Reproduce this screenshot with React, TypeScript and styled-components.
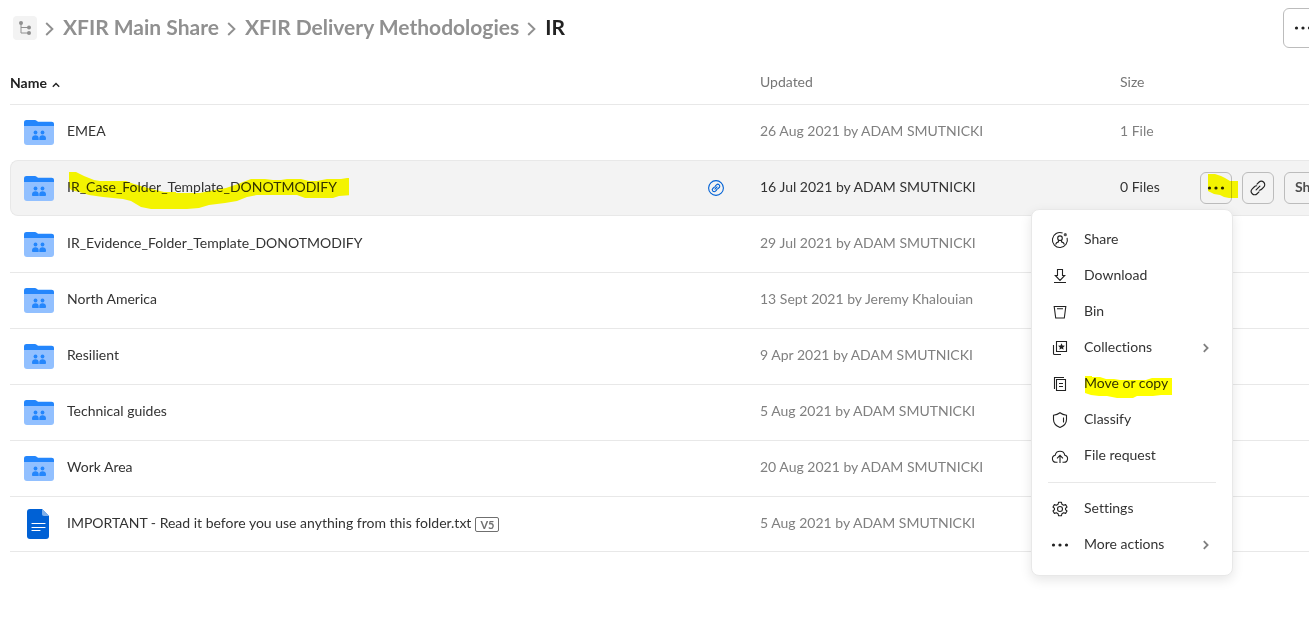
import React from 'react';
import styled, { createGlobalStyle, css } from 'styled-components';

const GlobalStyle = createGlobalStyle`
  *, *::before, *::after { box-sizing: border-box; }
  body {
    margin: 0;
    background: #fff;
    color: #333;
    font: 14px/20px Lato, "Liberation Sans", sans-serif;
    font-variant-ligatures: none;
    overflow: hidden;
  }
  button { font: inherit; font-variant-ligatures: none; color: inherit; cursor: pointer; }
  a { color: inherit; text-decoration: none; }
  svg { display: block; flex: none; }
`;

/* The list runs a little past the right edge of the window, as a scrolled pane. */
const Page = styled.div`
  width: calc(100% + 40px);
  min-height: 100vh;
  padding-left: 10px;
`;

const Header = styled.header`
  display: flex;
  align-items: center;
  justify-content: space-between;
  height: 56px;
  padding-right: 26px;
`;

const Crumbs = styled.nav`
  display: flex;
  align-items: center;
  gap: 8px;
  padding-left: 3px;
  font-size: 21px;
  line-height: 28px;
  font-weight: 700;
  color: #909090;
`;

const Crumb = styled.a<{ $current?: boolean }>`
  padding-bottom: 2px;
  color: ${(p) => (p.$current ? '#222' : 'inherit')};
`;

const TreeButton = styled.button`
  display: grid;
  place-items: center;
  width: 24px;
  height: 24px;
  padding: 0;
  border: 0;
  border-radius: 4px;
  background: #f3f3f3;
`;

const OutlineButton = styled.button<{ $size?: number }>`
  display: grid;
  place-items: center;
  flex: none;
  min-width: ${(p) => p.$size ?? 32}px;
  height: ${(p) => p.$size ?? 32}px;
  padding: 0;
  border: 1px solid #bcbcbc;
  border-radius: 6px;
  background: transparent;
`;

const ShareButton = styled(OutlineButton)`
  padding: 0 10px 2px;
  font-weight: 700;
  color: #4e4e4e;
`;

const FileTable = styled.table`
  width: 100%;
  table-layout: fixed;
  border-collapse: separate;
  border-spacing: 0;
`;

const HeadCell = styled.th<{ $width?: number; $sorted?: boolean }>`
  width: ${(p) => (p.$width ? `${p.$width}px` : 'auto')};
  height: 48px;
  padding: 4px 0 0;
  text-align: left;
  font-weight: ${(p) => (p.$sorted ? 700 : 400)};
  color: ${(p) => (p.$sorted ? '#222' : '#767676')};
`;

const SortLabel = styled.span`
  display: flex;
  align-items: center;
  gap: 5px;
  padding-top: 2px;
`;

const Cell = styled.td`
  height: 56px;
  padding: 0 0 1px;
  border-top: 1px solid #e8e8e8;
  color: #808080;
`;

const NameCell = styled(Cell)`
  padding: 0 36px 1px 13px;
`;

const Row = styled.tr<{ $selected?: boolean }>`
  &:last-child ${Cell} {
    border-bottom: 1px solid #e8e8e8;
    padding-bottom: 0;
  }
  ${(p) =>
    p.$selected &&
    css`
      ${Cell} {
        background: #f3f3f3;
        border-bottom: 1px solid #e8e8e8;
        padding-bottom: 0;
        color: #333;
      }
      ${Cell}:first-child {
        border-left: 1px solid #e8e8e8;
        border-radius: 8px 0 0 8px;
        padding-left: 12px;
      }
      & + tr ${Cell} { border-top-color: transparent; }
    `}
`;

const NameLine = styled.div`
  display: flex;
  align-items: center;
  gap: 12px;
`;

const FileName = styled.a`
  position: relative;
  padding-bottom: 2px;
  color: #333;
`;

const Text = styled.div`
  padding-bottom: 2px;
`;

const Version = styled.span`
  margin-left: -8px;
  padding: 0 4px;
  border: 1px solid #6f6f6f;
  border-radius: 2px;
  font-size: 11px;
  line-height: 13px;
  font-weight: 700;
  color: #6f6f6f;
`;

const SharedLink = styled.span`
  margin-left: auto;
`;

const Actions = styled.div`
  display: flex;
  gap: 10px;
`;

const MenuAnchor = styled.div`
  position: relative;
`;

const Menu = styled.div`
  position: absolute;
  top: calc(100% + 5px);
  right: -1px;
  z-index: 1;
  width: 202px;
  padding: 12px 16px;
  border: 1px solid #e8e8e8;
  border-radius: 8px;
  background: #fff;
  box-shadow: 0 4px 12px rgba(0, 0, 0, 0.1);
`;

const MenuItem = styled.button`
  display: flex;
  align-items: center;
  gap: 12px;
  width: 100%;
  height: 36px;
  padding: 0 6px 0 0;
  border: 0;
  background: none;
  text-align: left;
  color: #333;
`;

const MenuLabel = styled.span`
  position: relative;
  margin-right: auto;
  padding-bottom: 2px;
`;

const MenuRule = styled.hr`
  height: 1px;
  margin: 8px 0;
  border: 0;
  background: #e8e8e8;
`;

/* Marker strokes lie over the text and multiply into it. */
const Marker = styled.svg<{ $x: number; $y: number }>`
  position: absolute;
  left: ${(p) => p.$x}px;
  top: ${(p) => p.$y}px;
  mix-blend-mode: multiply;
  pointer-events: none;
  fill: #ff0;
`;

const Chevron = () => (
  <svg width="10" height="16" viewBox="0 0 10 16" fill="none" stroke="#909090" strokeWidth="1.900" aria-hidden="true">
    <path d="M1.200 3 7.400 9 1.200 15" />
  </svg>
);

const TreeIcon = () => (
  <svg width="16" height="16" viewBox="0 0 16 16" fill="#909090" aria-hidden="true">
    <circle cx="4" cy="3" r="2" />
    <circle cx="12" cy="7.500" r="2" />
    <circle cx="12" cy="13" r="2" />
    <path d="M4 3v10h8M4 7.500h8" fill="none" stroke="#909090" />
  </svg>
);

const SortIcon = () => (
  <svg width="8" height="12" viewBox="0 0 8 12" fill="none" stroke="#222" strokeWidth="1.400" aria-hidden="true">
    <path d="M.8 9.700 4 6.500 7.200 9.700" />
  </svg>
);

const FolderIcon = () => (
  <svg width="32" height="32" viewBox="0 0 32 32" aria-hidden="true">
    <path d="M1 12V6.500C1 4.800 2 4 3.500 4h8c1 0 1.500.3 2.200.8l.6.400c.5.400 1 .5 1.700.5h12.500c1.500 0 2.500.8 2.500 2.300v4z" fill="#2486fc" />
    <path d="M1 10h30v16c0 2-1 3-3 3H4c-2 0-3-1-3-3z" fill="#92c0ff" />
    <g fill="#2486fc">
      <circle cx="12.500" cy="16.500" r="1.900" />
      <circle cx="19.500" cy="16.500" r="1.900" />
      <path d="M9 22.500c0-2 1.500-3.200 3.500-3.200s3.200 1.200 3.200 3.200v1.500H10c-.7 0-1-.3-1-.8zM16.300 22.500c0-2 1.200-3.200 3.200-3.200s3.500 1.200 3.500 3.200v.7c0 .5-.3.8-1 .8h-5.700z" />
    </g>
  </svg>
);

const DocIcon = () => (
  <svg width="32" height="32" viewBox="0 0 32 32" aria-hidden="true">
    <path d="M7 1h12l7 7v20c0 2-1 3-3 3H7c-2 0-3-1-3-3V4c0-2 1-3 3-3z" fill="#0061d5" />
    <path d="M19 1l7 7h-5c-1.300 0-2-.7-2-2z" fill="#7fb0ea" />
    <path d="M9 15.500h13M9 19.500h13M9 22.500h8" stroke="#fff" strokeWidth="1.200" strokeLinecap="round" />
  </svg>
);

const ChainPaths = () => (
  <path d="M6.300 9.700 9.700 6.300M7.100 4.600l1.700-1.700a3 3 0 0 1 4.300 4.300l-1.900 1.900a3 3 0 0 1-2 .9M8.900 11.400l-1.700 1.700a3 3 0 0 1-4.300-4.300l1.900-1.900a3 3 0 0 1 2-.9" strokeLinecap="round" />
);

const ChainIcon = () => (
  <svg width="18" height="18" viewBox="0 0 16 16" fill="none" stroke="#222" aria-hidden="true">
    <ChainPaths />
  </svg>
);

const SharedLinkIcon = () => (
  <svg width="16" height="16" viewBox="0 0 16 16" fill="none" stroke="#0061d5" role="img" aria-label="Shared link">
    <circle cx="8" cy="8" r="7.400" strokeWidth="1.100" />
    <g transform="translate(3 3) scale(.625)" strokeWidth="1.700">
      <ChainPaths />
    </g>
  </svg>
);

const DotsIcon = () => (
  <svg width="18" height="18" viewBox="0 0 18 18" fill="#222" aria-hidden="true">
    <circle cx="2.500" cy="9" r="1.600" />
    <circle cx="9" cy="9" r="1.600" />
    <circle cx="15.500" cy="9" r="1.600" />
  </svg>
);

const MenuGlyph = ({ children }: { children: React.ReactNode }) => (
  <svg width="24" height="24" viewBox="0 0 24 24" fill="none" stroke="#222" strokeWidth="1.100" aria-hidden="true">
    {children}
  </svg>
);

const glyphs = {
  share: (
    <MenuGlyph>
      <path d="M14.600 5A7.500 7.500 0 1 0 19.100 9.900" />
      <circle cx="12" cy="10.200" r="2.300" />
      <path d="M7.600 16.500c.4-1.600 1.400-2.300 2.900-2.600v-1.600M16.400 16.500c-.4-1.600-1.400-2.300-2.900-2.600v-1.600" />
      <circle cx="17.300" cy="6.700" r="1.600" fill="#555" stroke="none" />
    </MenuGlyph>
  ),
  download: (
    <MenuGlyph>
      <path d="M9.500 5.500h5v6h2.200L12 16.500l-4.700-5h2.200zM6 18.500h12" />
    </MenuGlyph>
  ),
  bin: (
    <MenuGlyph>
      <path d="M6.200 6.500h11.600l-1.500 11.500H7.700zM9 8.700h6" />
    </MenuGlyph>
  ),
  collections: (
    <MenuGlyph>
      <path d="M8.500 5.500h10v10h-10zM5.500 9v8.500a1 1 0 0 0 1 1H13" />
      <path d="m13.500 7.300 1 2.200 2.400.3-1.800 1.600.5 2.400-2.100-1.200-2.100 1.200.5-2.400-1.800-1.600 2.400-.3z" fill="#222" stroke="none" />
    </MenuGlyph>
  ),
  copy: (
    <MenuGlyph>
      <path d="M8.500 7.500h9v11h-9zM6.500 17V5.500H16M11 11.500h4M11 14.500h4" />
    </MenuGlyph>
  ),
  classify: (
    <MenuGlyph>
      <path d="M12 4.800c1.800 1.400 4 2.200 6.500 2.400v4.300c0 3.700-2.400 6.400-6.500 8-4.100-1.600-6.500-4.300-6.500-8V7.200C8 7 10.200 6.200 12 4.800z" />
      <path d="M15.500 9.500v5" />
    </MenuGlyph>
  ),
  request: (
    <MenuGlyph>
      <path d="M9.500 18.300H8a3.600 3.600 0 0 1-.8-7.100 4.900 4.900 0 0 1 9.600 0 3.600 3.600 0 0 1-.8 7.100h-1.500" />
      <path d="M12 19v-7.500M9 14.300l3-3 3 3" />
    </MenuGlyph>
  ),
  settings: (
    <MenuGlyph>
      <circle cx="12" cy="12" r="2.500" />
      <path d="M10.600 5.200h2.800l.5 2 1.700 1 2-.6 1.400 2.400-1.500 1.400v1.200l1.500 1.400-1.400 2.400-2-.6-1.700 1-.5 2h-2.800l-.5-2-1.700-1-2 .6L5 14l1.500-1.400v-1.200L5 10l1.400-2.400 2 .6 1.700-1z" strokeLinejoin="round" />
    </MenuGlyph>
  ),
  more: (
    <MenuGlyph>
      <g fill="#222" stroke="none">
        <circle cx="5.500" cy="12" r="1.600" />
        <circle cx="12" cy="12" r="1.600" />
        <circle cx="18.500" cy="12" r="1.600" />
      </g>
    </MenuGlyph>
  ),
};

const SubmenuIcon = () => (
  <svg width="8" height="10" viewBox="0 0 8 10" fill="none" stroke="#808080" strokeWidth="1.800" aria-hidden="true">
    <path d="m1.800 1.200 3.800 3.800-3.800 3.800" />
  </svg>
);

type Entry = { icon: keyof typeof glyphs; label: string; submenu?: boolean; marked?: boolean };

const primaryActions: Entry[] = [
  { icon: 'share', label: 'Share' },
  { icon: 'download', label: 'Download' },
  { icon: 'bin', label: 'Bin' },
  { icon: 'collections', label: 'Collections', submenu: true },
  { icon: 'copy', label: 'Move or copy', marked: true },
  { icon: 'classify', label: 'Classify' },
  { icon: 'request', label: 'File request' },
];

const secondaryActions: Entry[] = [
  { icon: 'settings', label: 'Settings' },
  { icon: 'more', label: 'More actions', submenu: true },
];

const MenuEntries = ({ entries }: { entries: Entry[] }) => (
  <>
    {entries.map((e) => (
      <MenuItem key={e.label} type="button" role="menuitem">
        {glyphs[e.icon]}
        <MenuLabel>
          {e.label}
          {e.marked && (
            <Marker $x={1} $y={3} width="87" height="22" viewBox="0 0 87 22" aria-hidden="true">
              <path d="M0 0h7v1h8l6 2h8l6 1h26l6-2h20v17H76l-8 1H52l-4 2H32l-10-2H14l-8-1-6-2z" />
            </Marker>
          )}
        </MenuLabel>
        {e.submenu && <SubmenuIcon />}
      </MenuItem>
    ))}
  </>
);

type FileRow = { name: string; updated: string; size?: string; version?: string; selected?: boolean };

const files: FileRow[] = [
  { name: 'EMEA', updated: '26 Aug 2021 by ADAM SMUTNICKI', size: '1 File' },
  { name: 'IR_Case_Folder_Template_DONOTMODIFY', updated: '16 Jul 2021 by ADAM SMUTNICKI', size: '0 Files', selected: true },
  { name: 'IR_Evidence_Folder_Template_DONOTMODIFY', updated: '29 Jul 2021 by ADAM SMUTNICKI' },
  { name: 'North America', updated: '13 Sept 2021 by Jeremy Khalouian' },
  { name: 'Resilient', updated: '9 Apr 2021 by ADAM SMUTNICKI' },
  { name: 'Technical guides', updated: '5 Aug 2021 by ADAM SMUTNICKI' },
  { name: 'Work Area', updated: '20 Aug 2021 by ADAM SMUTNICKI' },
  { name: 'IMPORTANT - Read it before you use anything from this folder.txt', updated: '5 Aug 2021 by ADAM SMUTNICKI', version: 'V5' },
];

const RowActions = () => (
  <Actions>
    <MenuAnchor>
      <OutlineButton type="button" aria-label="More options" aria-expanded="true">
        <DotsIcon />
      </OutlineButton>
      <Marker $x={8} $y={2} width="30" height="24" viewBox="0 0 30 24" aria-hidden="true">
        <path d="M0 0h7l6 2 4 2 5 3h8v17h-9l-5-1-4-2-6-1-6-3z" />
      </Marker>
      <Menu role="menu">
        <MenuEntries entries={primaryActions} />
        <MenuRule />
        <MenuEntries entries={secondaryActions} />
      </Menu>
    </MenuAnchor>
    <OutlineButton type="button" aria-label="Copy link">
      <ChainIcon />
    </OutlineButton>
    <ShareButton type="button">Share</ShareButton>
  </Actions>
);

export default function App() {
  return (
    <>
      <GlobalStyle />
      <Page>
        <Header>
          <Crumbs aria-label="Breadcrumb">
            <TreeButton type="button" aria-label="Folder tree">
              <TreeIcon />
            </TreeButton>
            <Chevron />
            <Crumb href="#main-share">XFIR Main Share</Crumb>
            <Chevron />
            <Crumb href="#methodologies">XFIR Delivery Methodologies</Crumb>
            <Chevron />
            <Crumb href="#ir" $current aria-current="page">IR</Crumb>
          </Crumbs>
          <OutlineButton type="button" $size={40} aria-label="More options">
            <DotsIcon />
          </OutlineButton>
        </Header>
        <FileTable>
          <thead>
            <tr>
              <HeadCell $sorted aria-sort="ascending">
                <SortLabel>
                  Name
                  <SortIcon />
                </SortLabel>
              </HeadCell>
              <HeadCell $width={360}>Updated</HeadCell>
              <HeadCell $width={80}>Size</HeadCell>
              <HeadCell $width={149} aria-label="Actions" />
            </tr>
          </thead>
          <tbody>
            {files.map((f) => (
              <Row key={f.name} $selected={f.selected}>
                <NameCell>
                  <NameLine>
                    {f.version ? <DocIcon /> : <FolderIcon />}
                    <FileName href="#file">
                      {f.name}
                      {f.selected && (
                        <Marker $x={2} $y={-5} width="280" height="38" viewBox="0 0 280 38" aria-hidden="true">
                          <path d="M0 0h7l8 4 10 4 6 1h26l8 3 14 4 16 4h12v1h24l14-3 12-2 12-4 5-2 8-3h14l8 1h8l6-1h14l8 2h8l10-2h14l6-1h4v17l-12 1-6 2h-28l-8-3h-40l-10 2-10 4-12 2-16 2-10 3-12 1h-36l-10-2-10-6-8-2-20-2-14-2-10-3-8-2-2-3z" />
                        </Marker>
                      )}
                    </FileName>
                    {f.version && <Version>{f.version}</Version>}
                    {f.selected && (
                      <SharedLink>
                        <SharedLinkIcon />
                      </SharedLink>
                    )}
                  </NameLine>
                </NameCell>
                <Cell>
                  <Text>{f.updated}</Text>
                </Cell>
                <Cell>
                  <Text>{f.size}</Text>
                </Cell>
                <Cell>{f.selected && <RowActions />}</Cell>
              </Row>
            ))}
          </tbody>
        </FileTable>
      </Page>
    </>
  );
}
